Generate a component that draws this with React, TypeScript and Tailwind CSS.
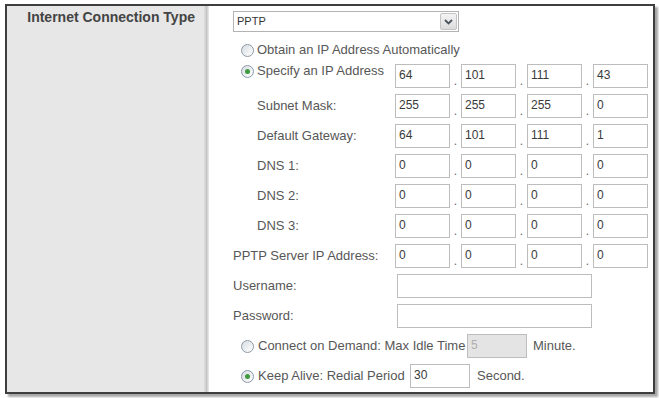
import React from "react";

const font = { fontFamily: '"Liberation Sans", Arial, sans-serif' };

function Radio({ checked }: { checked?: boolean }) {
  return (
    <span className="w-[13px] h-[13px] rounded-full border border-[#8c9aa6] bg-gradient-to-br from-[#d8dde2] to-white flex items-center justify-center shrink-0">
      {checked && <span className="w-[5px] h-[5px] rounded-full bg-[#3f9a3f]" />}
    </span>
  );
}

function Box({ value, w = "w-[55px]", disabled }: { value?: string; w?: string; disabled?: boolean }) {
  return (
    <div
      className={`${w} h-[24px] border border-[#bdbdbd] pl-[3px] pt-[2px] text-[12px] leading-[16px] ${
        disabled ? "bg-[#e4e4e4] text-[#b0b0b0]" : "bg-white text-[#3a3a3a]"
      }`}
    >
      {value}
    </div>
  );
}

function IpBoxes({ parts }: { parts: string[] }) {
  return (
    <div className="flex items-end">
      {parts.map((p, i) => (
        <React.Fragment key={i}>
          {i > 0 && (
            <span className="w-[11px] text-center text-[12px] leading-[14px] text-[#666]">.</span>
          )}
          <Box value={p} />
        </React.Fragment>
      ))}
    </div>
  );
}

function IpRow({ label, parts, indent }: { label: string; parts: string[]; indent?: boolean }) {
  return (
    <div className="h-[24px] flex items-center">
      <span className={`${indent ? "pl-[24px]" : ""} w-[162px] text-[13px] text-[#575757]`}>{label}</span>
      <IpBoxes parts={parts} />
    </div>
  );
}

export default function App() {
  return (
    <div className="w-[659px] h-[398px] bg-white pl-[5px] pt-[4px]" style={font}>
      <div className="w-[650px] h-[390px] border-2 border-[#3e3e3e] shadow-[3px_3px_2px_rgba(0,0,0,0.35)] flex">
        {/* left label column */}
        <div className="w-[197px] bg-[#e7e7e7] flex justify-end pr-[9px] pt-[3px]">
          <span className="text-[14px] font-bold text-[#444] leading-[16px]">
            Internet Connection Type
          </span>
        </div>
        <div className="w-[5px] bg-gradient-to-r from-[#e2e2e2] via-[#c5c5c5] to-[#ececec]" />

        {/* right form */}
        <div className="flex-1 bg-white pl-[24px] pt-[5px] flex flex-col">
          {/* select */}
          <div className="w-[226px] h-[21px] border border-[#b3b3b3] flex items-center justify-between pl-[3px] pr-[1px]">
            <span className="text-[11px] text-[#333]">PPTP</span>
            <span className="w-[17px] h-[17px] border border-[#c4c4c4] rounded-[2px] bg-gradient-to-b from-[#f4f4f4] to-[#dcdcdc] flex items-center justify-center">
              <svg width="9" height="6" viewBox="0 0 9 6">
                <path d="M1 1 L4.5 4.5 L8 1" fill="none" stroke="#4a5560" strokeWidth="1.8" />
              </svg>
            </span>
          </div>

          {/* obtain */}
          <div className="h-[24px] mt-[6px] flex items-center gap-[3px] pl-[8px]">
            <Radio />
            <span className="text-[13px] text-[#575757]">Obtain an IP Address Automatically</span>
          </div>

          {/* specify */}
          <div className="h-[24px] mt-[2px] flex items-start">
            <div className="w-[162px] flex items-center gap-[3px] pl-[8px] mt-[-1px]">
              <Radio checked />
              <span className="text-[13px] leading-[16px] text-[#575757]">Specify an IP Address</span>
            </div>
            <IpBoxes parts={["64", "101", "111", "43"]} />
          </div>

          <div className="flex flex-col gap-[6px] mt-[6px]">
            <IpRow indent label="Subnet Mask:" parts={["255", "255", "255", "0"]} />
            <IpRow indent label="Default Gateway:" parts={["64", "101", "111", "1"]} />
            <IpRow indent label="DNS 1:" parts={["0", "0", "0", "0"]} />
            <IpRow indent label="DNS 2:" parts={["0", "0", "0", "0"]} />
            <IpRow indent label="DNS 3:" parts={["0", "0", "0", "0"]} />
            <IpRow label="PPTP Server IP Address:" parts={["0", "0", "0", "0"]} />
            <div className="h-[24px] flex items-center">
              <span className="w-[164px] text-[13px] text-[#575757]">Username:</span>
              <Box w="w-[195px]" />
            </div>
            <div className="h-[24px] flex items-center">
              <span className="w-[164px] text-[13px] text-[#575757]">Password:</span>
              <Box w="w-[195px]" />
            </div>
            <div className="h-[24px] flex items-center pl-[8px]">
              <Radio />
              <span className="ml-[4px] w-[209px] whitespace-nowrap text-[13px] text-[#575757]">Connect on Demand: Max Idle Time</span>
              <Box w="w-[60px]" value="5" disabled />
              <span className="ml-[6px] text-[13px] text-[#575757]">Minute.</span>
            </div>
            <div className="h-[24px] flex items-center pl-[8px]">
              <Radio checked />
              <span className="ml-[4px] w-[152px] whitespace-nowrap text-[13px] text-[#575757]">Keep Alive: Redial Period</span>
              <Box w="w-[60px]" value="30" />
              <span className="ml-[7px] text-[13px] text-[#575757]">Second.</span>
            </div>
          </div>
        </div>
      </div>
    </div>
  );
}
